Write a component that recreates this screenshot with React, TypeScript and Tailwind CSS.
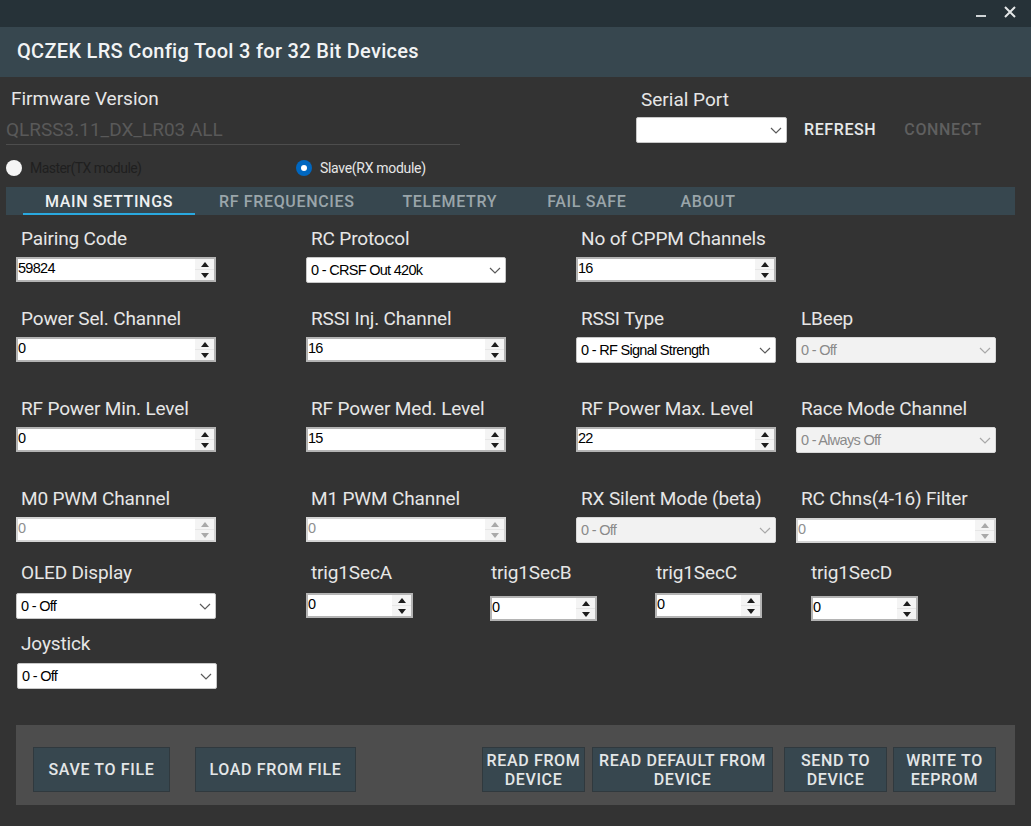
const roboto = "font-['Roboto',sans-serif]"
const ctl = "font-['Liberation_Sans',sans-serif] text-[14.5px] tracking-[-0.7px]"

const Chevron = ({ color = "#5a5a5a" }: { color?: string }) => (
  <svg width="12" height="7" viewBox="0 0 12 7" fill="none" stroke={color} strokeWidth="1.2">
    <path d="M1 1l5 5 5-5" />
  </svg>
)

const Spinner = ({
  value,
  disabled = false,
  className = "w-[200px]",
  mt = "mt-[6px]",
}: {
  value: string
  disabled?: boolean
  className?: string
  mt?: string
}) => {
  const arrow = disabled ? "#a9a9a9" : "#1c1c1c"
  return (
    <div
      className={`${className} ${mt} h-[25px] flex bg-white border-2 ${
        disabled ? "border-[#d4d4d4]" : "border-[#b4b4b4]"
      } ${ctl} leading-[18px]`}
    >
      <div className={`flex-1 ${disabled ? "text-[#8f8f8f]" : "text-black"}`}>{value}</div>
      <div className="w-[19px] flex flex-col gap-[1px] bg-[#e6e6e6]">
        <div className="flex-1 flex items-center justify-center bg-[#f4f4f4]">
          <svg width="8" height="5" viewBox="0 0 8 5" fill={arrow}>
            <path d="M4 0l4 5H0z" />
          </svg>
        </div>
        <div className="flex-1 flex items-center justify-center bg-[#f4f4f4]">
          <svg width="8" height="5" viewBox="0 0 8 5" fill={arrow}>
            <path d="M0 0h8L4 5z" />
          </svg>
        </div>
      </div>
    </div>
  )
}

const Dropdown = ({
  value = "",
  disabled = false,
  className = "w-[200px]",
  mt = "mt-[6px]",
}: {
  value?: string
  disabled?: boolean
  className?: string
  mt?: string
}) => (
  <div
    className={`${className} ${mt} h-[26px] flex items-center justify-between pl-[4px] pr-[4px] rounded-[2px] border ${
      disabled
        ? "bg-[#f2f2f2] border-[#d8d8d8] text-[#8a8a8a]"
        : "bg-white border-[#c8c8c8] text-black"
    } ${ctl}`}
  >
    <span className="pt-[1px]">{value}</span>
    <Chevron color={disabled ? "#a8a8a8" : "#5a5a5a"} />
  </div>
)

const Field = ({
  label,
  width,
  labelPad = "pl-[5px]",
  children,
}: {
  label: string
  width: string
  labelPad?: string
  children: React.ReactNode
}) => (
  <div className={`${width} shrink-0`}>
    <div className={`${labelPad} h-[24px] leading-[24px] text-[19px] tracking-[-0.15px] text-[#e6e6e6] whitespace-nowrap ${roboto}`}>{label}</div>
    {children}
  </div>
)

const FooterButton = ({ width, children }: { width: string; children: React.ReactNode }) => (
  <div
    className={`${width} h-[45px] flex items-center justify-center text-center bg-[#37474f] border border-[#30393e] text-[#e3e6e7] text-[16px] leading-[19px] font-medium tracking-[0.65px] ${roboto}`}
  >
    {children}
  </div>
)

const tabs = [
  { name: "RF FREQUENCIES", ml: "ml-[24px]" },
  { name: "TELEMETRY", ml: "ml-[48px]" },
  { name: "FAIL SAFE", ml: "ml-[50px]" },
  { name: "ABOUT", ml: "ml-[54px]" },
]

export default function App() {
  return (
    <div className="w-[1031px] h-[826px] overflow-hidden flex flex-col bg-[#333333]">
      <div className="h-[27px] bg-[#263238] flex items-center justify-end gap-[18px] pr-[15px]">
        <div className="w-[10px] h-[2px] mt-[5px] bg-[#cfd4d6]" />
        <svg width="12" height="12" viewBox="0 0 12 12" stroke="#e4e7e8" strokeWidth="2" className="mb-[3px]">
          <path d="M1 1l10 10M11 1L1 11" />
        </svg>
      </div>
      <div className={`h-[50px] bg-[#37474f] pl-[17px] pb-[3px] flex items-center text-[#f2f4f5] text-[20px] tracking-[0.3px] font-medium ${roboto}`}>
        QCZEK LRS Config Tool 3 for 32 Bit Devices
      </div>

      <div className="mt-[10px] ml-[6px] flex">
        <div className="w-[454px]">
          <div className={`pl-[5px] h-[24px] leading-[24px] text-[19px] text-[#e6e6e6] ${roboto}`}>Firmware Version</div>
          <div className={`mt-[6px] h-[28px] leading-[25px] border-b border-[#4d4d4d] text-[19px] text-[#595959] ${roboto}`}>
            QLRSS3.11_DX_LR03 ALL
          </div>
        </div>
        <div className="ml-[176px]">
          <div className={`pl-[5px] h-[24px] leading-[25px] text-[19px] text-[#e6e6e6] ${roboto}`}>Serial Port</div>
          <div className="mt-[6px] flex items-center">
            <Dropdown className="w-[151px]" mt="mt-0" />
            <div className={`ml-[17px] text-[16px] font-medium tracking-[0.6px] text-[#e6e9ea] ${roboto}`}>REFRESH</div>
            <div className={`ml-[28px] text-[16px] font-medium tracking-[0.65px] text-[#5f5f5f] ${roboto}`}>CONNECT</div>
          </div>
        </div>
      </div>

      <div className={`mt-[15px] ml-[6px] h-[16px] flex items-center text-[14px] tracking-[-0.3px] ${roboto}`}>
        <div className="w-[16px] h-[16px] rounded-full bg-[#f5f5f5]" />
        <span className="ml-[8px] w-[266px] text-[#1f1f1f] tracking-[-0.55px]">Master(TX module)</span>
        <div className="w-[16px] h-[16px] rounded-full bg-[#0067c0] flex items-center justify-center">
          <div className="w-[6px] h-[6px] rounded-full bg-white" />
        </div>
        <span className="ml-[8px] text-[#e6e6e6]">Slave(RX module)</span>
      </div>

      <div className={`mt-[11px] mx-[6px] w-[1009px] h-[28px] bg-[#37474f] flex pl-[17px] text-[16px] font-medium tracking-[0.65px] leading-[29px] ${roboto}`}>
        <div className="w-[172px] h-[28px] text-center text-[#eef0f1] border-b-2 border-[#29a9e0]">MAIN SETTINGS</div>
        {tabs.map((tab) => (
          <div key={tab.name} className={`${tab.ml} text-[#9aa5aa]`}>
            {tab.name}
          </div>
        ))}
      </div>

      <div className="pl-[16px]">
        <div className="mt-[12px] flex">
          <Field label="Pairing Code" width="w-[290px]"><Spinner value="59824" /></Field>
          <Field label="RC Protocol" width="w-[270px]"><Dropdown value="0 - CRSF Out 420k" /></Field>
          <Field label="No of CPPM Channels" width="w-[220px]"><Spinner value="16" /></Field>
        </div>
        <div className="mt-[24px] flex">
          <Field label="Power Sel. Channel" width="w-[290px]"><Spinner value="0" /></Field>
          <Field label="RSSI Inj. Channel" width="w-[270px]"><Spinner value="16" /></Field>
          <Field label="RSSI Type" width="w-[220px]"><Dropdown value="0 - RF Signal Strength" /></Field>
          <Field label="LBeep" width="w-[200px]"><Dropdown value="0 - Off" disabled /></Field>
        </div>
        <div className="mt-[34px] flex">
          <Field label="RF Power Min. Level" width="w-[290px]"><Spinner value="0" /></Field>
          <Field label="RF Power Med. Level" width="w-[270px]"><Spinner value="15" /></Field>
          <Field label="RF Power Max. Level" width="w-[220px]"><Spinner value="22" /></Field>
          <Field label="Race Mode Channel" width="w-[200px]"><Dropdown value="0 - Always Off" disabled /></Field>
        </div>
        <div className="mt-[34px] flex">
          <Field label="M0 PWM Channel" width="w-[290px]"><Spinner value="0" disabled /></Field>
          <Field label="M1 PWM Channel" width="w-[270px]"><Spinner value="0" disabled /></Field>
          <Field label="RX Silent Mode (beta)" width="w-[220px]"><Dropdown value="0 - Off" disabled /></Field>
          <Field label="RC Chns(4-16) Filter" width="w-[200px]"><Spinner value="0" disabled mt="mt-[7px]" /></Field>
        </div>
        <div className="mt-[18px] flex">
          <Field label="OLED Display" width="w-[290px]"><Dropdown value="0 - Off" mt="mt-[8px]" /></Field>
          <Field label="trig1SecA" width="w-[184px]"><Spinner value="0" className="w-[107px]" mt="mt-[8px]" /></Field>
          <Field label="trig1SecB" width="w-[165px]" labelPad="pl-[1px]"><Spinner value="0" className="w-[107px]" mt="mt-[11px]" /></Field>
          <Field label="trig1SecC" width="w-[156px]" labelPad="pl-[1px]"><Spinner value="0" className="w-[107px]" mt="mt-[8px]" /></Field>
          <Field label="trig1SecD" width="w-[107px]" labelPad="pl-0"><Spinner value="0" className="w-[107px]" mt="mt-[11px]" /></Field>
        </div>
        <div className="mt-[11px] flex">
          <Field label="Joystick" width="w-[201px]"><Dropdown value="0 - Off" className="w-[200px] ml-[1px]" mt="mt-[7px]" /></Field>
        </div>
      </div>

      <div className="mt-[36px] ml-[16px] w-[999px] h-[80px] bg-[#4d4d4d] flex pt-[22px] pl-[17px]">
        <FooterButton width="w-[137px]">SAVE TO FILE</FooterButton>
        <div className="ml-[25px]"><FooterButton width="w-[161px]">LOAD FROM FILE</FooterButton></div>
        <div className="ml-[126px]"><FooterButton width="w-[103px]">READ FROM<br />DEVICE</FooterButton></div>
        <div className="ml-[7px]"><FooterButton width="w-[181px]">READ DEFAULT FROM<br />DEVICE</FooterButton></div>
        <div className="ml-[11px]"><FooterButton width="w-[103px]">SEND TO<br />DEVICE</FooterButton></div>
        <div className="ml-[6px]"><FooterButton width="w-[103px]">WRITE TO<br />EEPROM</FooterButton></div>
      </div>
    </div>
  )
}
